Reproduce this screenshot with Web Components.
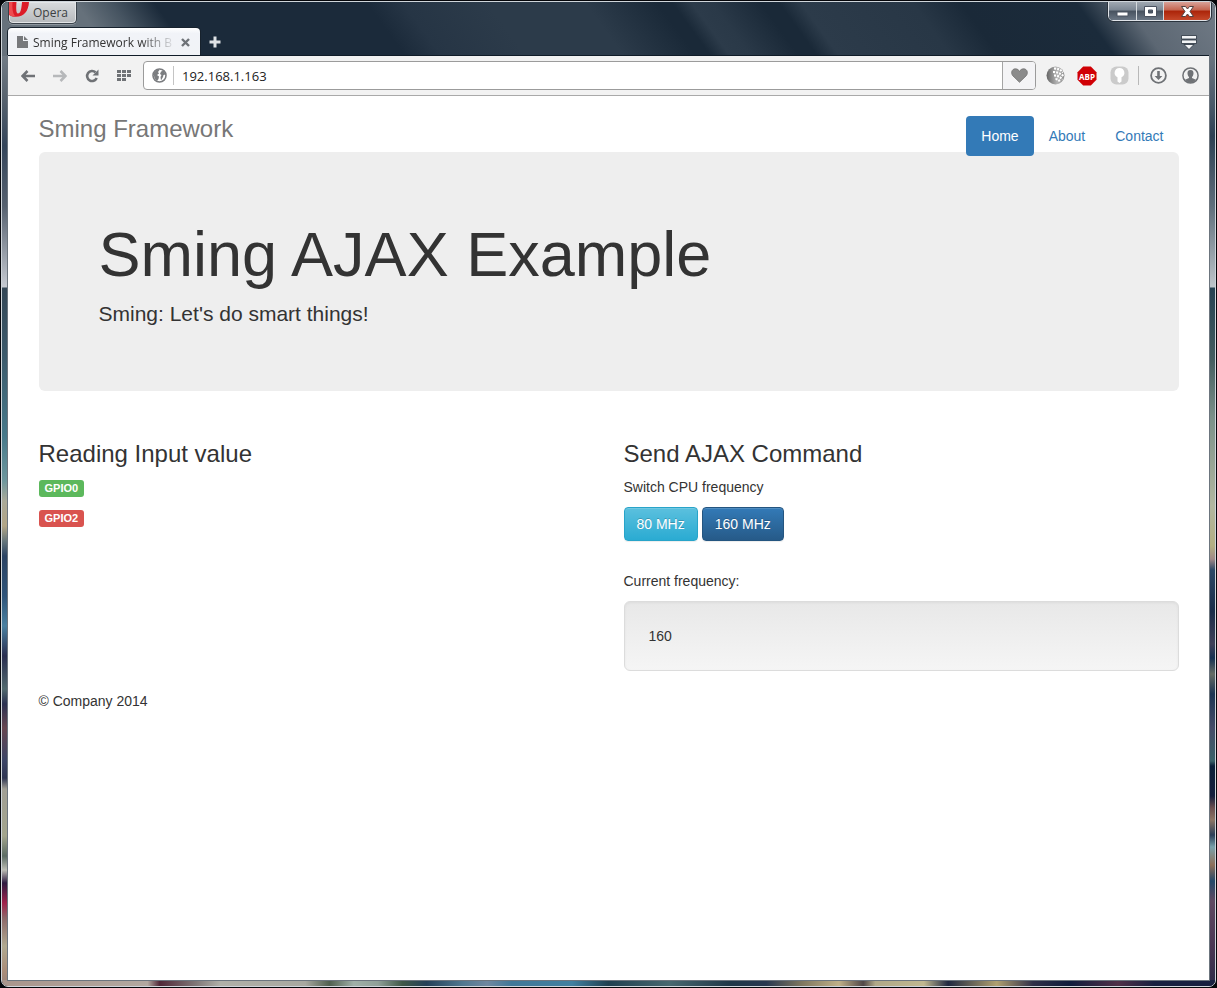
<!DOCTYPE html>
<html lang="en">
<head>
<meta charset="utf-8">
<title>Sming Framework with Bootstrap</title>
<style>
  body { margin: 0; background: #000; font: 14px/20px "Liberation Sans", Arial, sans-serif; color: #333; }
</style>
</head>
<body>
<browser-window>
  <title-bar slot="title"></title-bar>
  <browser-toolbar slot="toolbar" address="192.168.1.163"></browser-toolbar>
  <page-container>
    <site-header heading="Sming Framework"></site-header>
    <hero-banner heading="Sming AJAX Example">Sming: Let's do smart things!</hero-banner>
    <two-columns>
      <content-section heading="Reading Input value">
        <pin-label state="high">GPIO0</pin-label>
        <pin-label state="low">GPIO2</pin-label>
      </content-section>
      <content-section heading="Send AJAX Command">
        <frequency-panel current="160"></frequency-panel>
      </content-section>
    </two-columns>
    <site-footer>© Company 2014</site-footer>
  </page-container>
</browser-window>

<script>
const define = (name, html, ready) => {
  const template = document.createElement('template');
  template.innerHTML = '<style>*{box-sizing:border-box}</style>' + html;
  customElements.define(name, class extends HTMLElement {
    constructor() {
      super();
      this.attachShadow({ mode: 'open' }).append(template.content.cloneNode(true));
    }
    connectedCallback() { if (ready) ready(this, this.shadowRoot); }
  });
};

const icons = {
  page: [11, 12, '<path d="M0 0h6v5h5v7H0z" fill="#77797c"/><path d="M7 0l4 4H7z" fill="#77797c"/>'],
  tabclose: [9, 9, '<path d="M1 1l7 7M8 1L1 8" stroke="#6f7378" stroke-width="2.4" fill="none"/>'],
  plus: [12, 12, '<path d="M6 .5v11M.5 6h11" stroke="#dfe2e5" stroke-width="3" fill="none"/>'],
  tabmenu: [16, 15, '<g fill="#f1f3f5" stroke="#28333f" stroke-width=".8"><path d="M.5.5h15v3.500H.5zM.5 5h15v3.500H.5zM3 9.500h10L8 14.500z"/></g>'],
  opera: [21, 16, '<path d="M0 0V13C2 14.300 4 14.800 7 14.800C15 14.800 19.500 9 20 0H13C12.500 7 11.500 11.500 9 11.500C7 11.500 7 6 7.500 0z" fill="#dc1c28"/><path d="M0 0V12.500C2 14 4 14.500 6 14.300C3.500 11 3 6 3.500 0z" fill="#ee4b50"/>'],
  min: [13, 6, '<path d="M1 1h11v4H1z" fill="#fff" stroke="#4a5260"/>'],
  max: [13, 11, '<path fill-rule="evenodd" d="M.5.5h12v10H.5zM4.500 4h4v3h-4z" fill="#fff" stroke="#4a5260"/>'],
  close: [13, 11, '<path d="M.5.5h4l2 2.500 2-2.500h4L9 5.500l3.500 5h-4l-2-2.500-2 2.500h-4L4 5.500z" fill="#fff" stroke="#51403f"/>'],
  back: [14, 12, '<path d="M6.500 1L1.500 6l5 5M2 6h12" stroke="#6f7276" stroke-width="2.600" fill="none"/>'],
  forward: [14, 12, '<path d="M7.500 1l5 5-5 5M12 6H0" stroke="#b6b8ba" stroke-width="2.600" fill="none"/>'],
  reload: [14, 14, '<path d="M10.500 3.300A5 5 0 1 0 11.700 9" stroke="#6f7276" stroke-width="2.600" fill="none"/><path d="M13.500.5v6H7.500z" fill="#6f7276"/>'],
  grid: [14, 11, '<path d="M0 0h4v3H0zM5 0h4v3H5zM10 0h4v3h-4zM0 4h4v3H0zM5 4h4v3H5zM10 4h4v3h-4zM0 8h4v3H0zM5 8h4v3H5z" fill="#6f7276"/>'],
  globe: [15, 15, '<circle cx="7.500" cy="7.500" r="6.500" fill="#fff" stroke="#7b7d80" stroke-width="1.600"/><path d="M1.500 5L5 1.500l2.500.5L6 4l1 1.500L5 7l2 1.500L6.500 11 5 13 2.500 10.500zM9 3.500l3-1 1.500 4-2 .5-.5 2-2 3.500L8.500 9l1-2-1.500-1z" fill="#7b7d80"/>'],
  heart: [17, 15, '<path d="M8.500 14.300L1.800 7.800C-.6 4.800 1 .8 4.300.8 6.500.8 7.800 2 8.500 3.500 9.200 2 10.500.8 12.700.8 16 .8 17.600 4.800 15.200 7.800z" fill="#8b8b8b" stroke="#717171" stroke-width=".8"/>'],
  sphere: [19, 19, '<defs><linearGradient id="s"><stop offset="0" stop-color="#666"/><stop offset=".6" stop-color="#b5b5b5"/><stop offset="1" stop-color="#8e8e8e"/></linearGradient></defs><circle cx="9.500" cy="9.500" r="9" fill="url(#s)"/><g fill="none" stroke="#fff" stroke-width="2.200" stroke-dasharray="2 1.100"><path d="M8 2.500q6 0 9 4M7 6q6 0 10.500 4M8 9.500q5 0 8.500 4M9.500 13q3 0 4.500 3"/></g>'],
  adblock: [20, 20, '<path d="M6.200.5h7.600l5.700 5.700v7.600l-5.700 5.700H6.200L.5 13.800V6.200z" fill="#d00005"/><text x="10" y="13.500" text-anchor="middle" font-family="Open Sans, Noto Sans, sans-serif" font-weight="700" font-size="8" fill="#fff">ABP</text>'],
  key: [19, 19, '<rect x=".5" y=".5" width="18" height="18" rx="6" fill="#cbcbcb"/><path d="M9.500 2a4.800 4.800 0 0 1 2 9.200V15.500l-2 1.500-2-1.500v-4.300a4.800 4.800 0 0 1 2-9.200z" fill="#fff"/>'],
  download: [17, 17, '<circle cx="8.500" cy="8.500" r="7.400" fill="none" stroke="#6f7276" stroke-width="1.800"/><path d="M7.200 4h2.600v5h2.600l-3.900 4-3.900-4h2.600z" fill="#6f7276"/>'],
  user: [17, 17, '<circle cx="8.500" cy="8.500" r="7.600" fill="none" stroke="#6f7276" stroke-width="1.500"/><path d="M8.500 3C11 3 11.500 4.500 11.500 6.500 11.500 8 10.500 9.500 10 10.300V11l4 1.800Q11.500 16 8.500 16T3 12.800L7 11v-.7C6.500 9.500 5.500 8 5.500 6.500 5.500 4.500 6 3 8.500 3z" fill="#6f7276"/>']
};

define('ui-icon', `<style>:host{display:block;flex:none} svg{display:block}</style>`, (el, root) => {
  const [w, h, art] = icons[el.getAttribute('name')];
  root.innerHTML += `<svg width="${w}" height="${h}" viewBox="0 0 ${w} ${h}" aria-hidden="true">${art}</svg>`;
});

define('browser-window', `
<style>
  :host { display: block; padding: 1px; background: #05060a; }
  .frame {
    position: relative; display: flex; flex-direction: column; min-height: calc(100vh - 2px);
    padding: 0 6px 6px; border: 1px solid #cfd5da; border-radius: 7px; overflow: hidden; background: #1b2a3a;
  }
  .glass { position: absolute; pointer-events: none; }
  .top { inset: 0 0 auto; width: 100%; height: 54px; }
  .left, .right { top: 54px; bottom: 0; width: 7px; }
  .left { left: 0; background: linear-gradient(#717b85, #59646f 40px, #34455a 90px, #56616f 150px, #c6cad1 231px,
    #344756 232px, #3c5a6b 300px, #47798a 380px, #6f979d 425px, #aaa998 445px, #b2a586 470px, #67777c 485px,
    #2b4363 500px, #2f5479 540px, #4a80a0 570px, #292e50 600px, #52696e 633px, #2b3151 648px, #674650 672px,
    #3c4566 704px, #2f3552 722px, #a19f95 733px, #a3a58d 780px, #5c6c64 800px, #bcbdb4 814px, #2d1a40 827px,
    #a0224b 847px, #8d6869 862px, #b0a990 890px, #ab8d79 915px, #98837b); }
  .right { right: 0; background: linear-gradient(#69747f, #485868 50px, #2d4053 80px, #5f6e7b 150px, #bec5ca 231px,
    #264252 232px, #445e60 304px, #7b9189 361px, #b2b7a0 450px, #b3af82 490px, #a18988 503px, #2c4866 514px,
    #1b2d49 555px, #414159 588px, #173151 602px, #666d65 618px, #1d3553 638px, #454c68 672px, #3b6269 705px,
    #0c213a 710px, #161f3d 740px, #6c5050 752px, #8d7665 764px, #2c3f58 779px, #7aa2ab 791px, #8e7059 809px,
    #264969 825px, #604a62 845px, #4b3754 890px, #302c48); }
  .bottom { left: 0; right: 0; bottom: 0; height: 6px; background: linear-gradient(90deg, #aa958c, #b2a8a0 12%,
    #502838 13%, #807878 16%, #b0b0a8 18%, #a8a8a0 25%, #506050 27%, #a0b0a8 29%, #90a098 31%, #405848 33%,
    #244058 35%, #507890 38%, #7088a0 40%, #407898 42%, #4080a0 47%, #204050 50%, #486870 55%, #203848 60%,
    #283850 63%, #807860 66%, #c0b088 69%, #504848 71%, #b0a888 72%, #c0b890 76%, #202840 78%, #b0a070 82%,
    #303048 85%, #101c3c 88%, #503048 92%, #182040 95%, #182040); }
  .title { position: relative; height: 54px; }
  .client { position: relative; flex: 1; background: #fff; box-shadow: 0 0 0 1px #6c757e; }
  .client::before { content: ""; position: absolute; left: 0; right: 0; top: -1px; height: 1px; background: #101c28; }
</style>
<div class="frame">
  <svg class="glass top" viewBox="0 0 1213 54" preserveAspectRatio="none" aria-hidden="true">
    <defs>
      <linearGradient id="sheen" gradientUnits="userSpaceOnUse" x1="0" y1="0" x2="1213" y2="0" gradientTransform="skewX(36)">
        <stop offset="0" stop-color="#66717b"/><stop offset=".06" stop-color="#66717b"/>
        <stop offset=".09" stop-color="#465461"/><stop offset=".125" stop-color="#1b2a3a"/>
        <stop offset=".30" stop-color="#1b2a3a"/><stop offset=".33" stop-color="#263545"/>
        <stop offset=".40" stop-color="#2c3b4a"/><stop offset=".48" stop-color="#2c3b4a"/>
        <stop offset=".54" stop-color="#1a2938"/><stop offset=".552" stop-color="#1a2938"/>
        <stop offset=".568" stop-color="#2c3b4a"/><stop offset=".585" stop-color="#2a3948"/>
        <stop offset=".625" stop-color="#1a2938"/><stop offset=".64" stop-color="#1a2938"/>
        <stop offset=".658" stop-color="#2c3b4a"/><stop offset=".75" stop-color="#283746"/>
        <stop offset=".79" stop-color="#1a2938"/><stop offset=".885" stop-color="#1b2b3b"/>
        <stop offset=".925" stop-color="#5c6773"/><stop offset="1" stop-color="#717b86"/>
      </linearGradient>
    </defs>
    <rect width="1213" height="54" fill="url(#sheen)"/>
  </svg>
  <div class="glass left"></div>
  <div class="glass right"></div>
  <div class="glass bottom"></div>
  <div class="title"><slot name="title"></slot></div>
  <div class="client"><slot name="toolbar"></slot><slot></slot></div>
</div>`);

define('title-bar', `
<style>
  :host { display: block; font: 12px/16px "Open Sans", "Noto Sans", sans-serif; color: #333; }
  button { margin: 0; padding: 0; border: 0; background: none; font: inherit; color: inherit; display: flex; align-items: center; justify-content: center; }
  .caption { display: flex; justify-content: space-between; align-items: flex-start; height: 26px; }
  .menu { width: 69px; height: 22px; border: 1px solid #3a424a; border-top: 0; border-radius: 0 0 5px 5px;
    background: linear-gradient(#d9dbdd, #b6b9bc); box-shadow: inset 0 0 0 1px #e3e5e7, 0 1px 0 #8c959d; align-items: flex-start; justify-content: flex-start; gap: 3px; }
  .menu span { padding-top: 3px; color: #3c3f42; }
  .controls { display: flex; height: 19px; margin-right: -2px; border: 1px solid #dfe3e8; border-top: 0; border-radius: 0 0 5px 5px; outline: 1px solid #2a333d; overflow: hidden; }
  .controls button { width: 27px; height: 18px; background: linear-gradient(#a0a8b1, #7c8793 45%, #47525f 50%, #6a7684); border-right: 1px solid #d5dade; }
  .controls .min { width: 28px; padding-top: 6px; }
  .controls .close { width: 46px; border: 0; background: linear-gradient(#d9a298, #c4644f 45%, #ab2409 50%, #c5482a); }
  .tabs { display: flex; align-items: center; height: 28px; }
  .tab { display: flex; align-items: center; width: 192px; height: 28px; padding: 0 10px 0 9px; gap: 5px;
    background: linear-gradient(#fff, #f1f3f8 20%, #f1f3f6); border-radius: 4px 4px 0 0; box-shadow: 0 0 0 1px #17222d; }
  .tab a { flex: 1; padding-top: 1px; white-space: nowrap; color: #333; text-decoration: none;
    -webkit-mask: linear-gradient(90deg, #000 75%, transparent); mask: linear-gradient(90deg, #000 75%, transparent); }
  .new { width: 30px; height: 28px; }
  .list { margin-left: auto; width: 40px; height: 28px; }
</style>
<div class="caption">
  <button class="menu"><ui-icon name="opera"></ui-icon><span>Opera</span></button>
  <div class="controls">
    <button class="min" aria-label="Minimize"><ui-icon name="min"></ui-icon></button>
    <button aria-label="Maximize"><ui-icon name="max"></ui-icon></button>
    <button class="close" aria-label="Close"><ui-icon name="close"></ui-icon></button>
  </div>
</div>
<div class="tabs">
  <div class="tab"><ui-icon name="page"></ui-icon><a href="#">Sming Framework with B</a><button aria-label="Close tab"><ui-icon name="tabclose"></ui-icon></button></div>
  <button class="new" aria-label="New tab"><ui-icon name="plus"></ui-icon></button>
  <button class="list" aria-label="Tab menu"><ui-icon name="tabmenu"></ui-icon></button>
</div>`);

define('tool-button', `
<style>
  :host { display: block; flex: none; width: 32px; }
  button { width: 100%; height: 27px; margin: 0; padding: 0; border: 0; background: none; display: flex; align-items: center; justify-content: center; }
</style>
<button></button>`, (el, root) => {
  const button = root.querySelector('button');
  button.setAttribute('aria-label', el.getAttribute('label'));
  button.innerHTML = `<ui-icon name="${el.getAttribute('icon')}"></ui-icon>`;
});

define('browser-toolbar', `
<style>
  :host { display: flex; align-items: center; height: 40px; padding: 0 3px 0 4px; background: #f2f2f2; border-bottom: 1px solid #a9a9a9; box-sizing: border-box; }
  .address { flex: 1; display: flex; align-items: center; height: 29px; margin: 0 3px; border: 1px solid #9b9b9b; border-radius: 4px; background: #fff; overflow: hidden; }
  .site { width: 30px; height: 19px; padding-left: 8px; border-right: 1px solid #c4c4c4; display: flex; align-items: center; }
  input { flex: 1; min-width: 0; margin: 0; padding: 0 8px; border: 0; outline: 0; background: none; font: 13px/18px "Open Sans", "Noto Sans", sans-serif; color: #222; }
  .save { align-self: stretch; border-left: 1px solid #a5a5a5; background: #f4f4f6; }
  .rule { width: 1px; height: 19px; margin: 0 3px; background: #b8b8b8; }
</style>
<tool-button icon="back" label="Back"></tool-button>
<tool-button icon="forward" label="Forward"></tool-button>
<tool-button icon="reload" label="Reload"></tool-button>
<tool-button icon="grid" label="Speed dial"></tool-button>
<div class="address">
  <span class="site"><ui-icon name="globe"></ui-icon></span>
  <input type="text" aria-label="Address" spellcheck="false">
  <div class="save"><tool-button icon="heart" label="Add bookmark"></tool-button></div>
</div>
<tool-button icon="sphere" label="Translate"></tool-button>
<tool-button icon="adblock" label="Adblock Plus"></tool-button>
<tool-button icon="key" label="Passwords"></tool-button>
<div class="rule"></div>
<tool-button icon="download" label="Downloads"></tool-button>
<tool-button icon="user" label="Account"></tool-button>`, (el, root) => {
  root.querySelector('input').value = el.getAttribute('address');
});

define('page-container', `
<style>:host { display: block; max-width: 1170px; margin: 0 auto; padding: 20px 15px; box-sizing: border-box; }</style><slot></slot>`);

define('site-header', `
<style>
  :host { display: flex; justify-content: space-between; align-items: flex-start; }
  h3 { margin: 0 0 10px; font-weight: 400; font-size: 24px; line-height: 26px; color: #777; }
  nav { position: relative; z-index: 1; display: flex; margin-bottom: -4px; }
  a { display: block; padding: 10px 15px; border-radius: 4px; color: #337ab7; text-decoration: none; }
  a[aria-current] { color: #fff; background: #337ab7; }
</style>
<h3></h3>
<nav><a href="#" aria-current="page">Home</a><a href="#about">About</a><a href="#contact">Contact</a></nav>`, (el, root) => {
  root.querySelector('h3').textContent = el.getAttribute('heading');
});

define('hero-banner', `
<style>
  :host { display: block; margin-bottom: 30px; padding: 48px 60px; border-radius: 6px; background: #eee; box-sizing: border-box; }
  h1 { margin: 20px 0 10px; font-weight: 400; font-size: 63px; line-height: 69px; }
  p { margin: 0 0 14px; font-size: 21px; line-height: 30px; }
</style>
<h1></h1><p><slot></slot></p>`, (el, root) => {
  root.querySelector('h1').textContent = el.getAttribute('heading');
});

define('two-columns', `
<style>:host { display: grid; grid-template-columns: 1fr 1fr; gap: 30px; }</style><slot></slot>`);

define('content-section', `
<style>
  :host { display: block; }
  h3 { margin: 20px 0 10px; font-weight: 400; font-size: 24px; line-height: 26px; }
</style>
<h3></h3><slot></slot>`, (el, root) => {
  root.querySelector('h3').textContent = el.getAttribute('heading');
});

define('pin-label', `
<style>
  :host { display: flex; height: 20px; align-items: center; margin-bottom: 10px; padding-top: 3px; box-sizing: border-box; }
  span { padding: 0 6px; border-radius: 3px; background: #5cb85c; color: #fff; font-weight: 700; font-size: 11px; line-height: 17px; }
  :host([state="low"]) span { background: #d9534f; }
</style>
<span><slot></slot></span>`);

define('action-button', `
<style>
  :host { display: block; }
  button { display: block; margin: 0; padding: 6px 12px; border: 1px solid #28a4c9; border-radius: 4px; color: #fff; font: inherit;
    background: linear-gradient(#5bc0de, #2aabd2); text-shadow: 0 -1px 0 rgba(0,0,0,.2);
    box-shadow: inset 0 1px 0 rgba(255,255,255,.15), 0 1px 1px rgba(0,0,0,.075); }
  :host([kind="primary"]) button { background: linear-gradient(#337ab7, #265a88); border-color: #245580; }
</style>
<button><slot></slot></button>`);

define('frequency-panel', `
<style>
  :host { display: block; }
  p { margin: 0 0 10px; }
  .buttons { display: flex; gap: 4px; margin-bottom: 30px; }
  .well { margin-bottom: 20px; padding: 24px; border: 1px solid #dcdcdc; border-radius: 6px;
    background: linear-gradient(#e8e8e8, #f5f5f5); box-shadow: inset 0 1px 3px rgba(0,0,0,.05); }
</style>
<p>Switch CPU frequency</p>
<div class="buttons"><action-button>80 MHz</action-button><action-button kind="primary">160 MHz</action-button></div>
<p>Current frequency:</p>
<div class="well"></div>`, (el, root) => {
  const well = root.querySelector('.well');
  well.textContent = el.getAttribute('current');
  root.querySelectorAll('action-button').forEach(b =>
    b.addEventListener('click', () => { well.textContent = parseInt(b.textContent, 10); }));
});

define('site-footer', `
<style>:host { display: block; } p { margin: 0 0 10px; }</style><footer><p><slot></slot></p></footer>`);
</script>
</body>
</html>
